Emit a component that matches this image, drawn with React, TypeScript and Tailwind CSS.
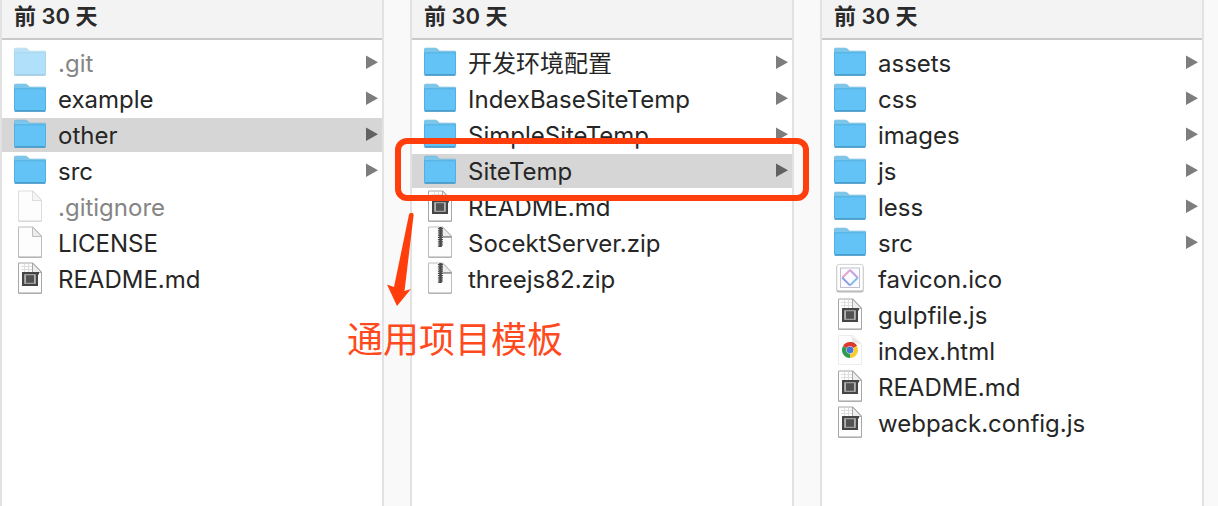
import { Fragment } from 'react';
import type { ReactNode } from 'react';

type Kind = 'folder' | 'blank' | 'code' | 'zip' | 'ico' | 'html';

interface Entry {
  name: string;
  kind: Kind;
  hidden?: boolean;
  selected?: boolean;
  note?: string;
}

const columns: { title: string; entries: Entry[] }[] = [
  {
    title: '前 30 天',
    entries: [
      { name: '.git', kind: 'folder', hidden: true },
      { name: 'example', kind: 'folder' },
      { name: 'other', kind: 'folder', selected: true },
      { name: 'src', kind: 'folder' },
      { name: '.gitignore', kind: 'blank', hidden: true },
      { name: 'LICENSE', kind: 'blank' },
      { name: 'README.md', kind: 'code' },
    ],
  },
  {
    title: '前 30 天',
    entries: [
      { name: '开发环境配置', kind: 'folder' },
      { name: 'IndexBaseSiteTemp', kind: 'folder' },
      { name: 'SimpleSiteTemp', kind: 'folder' },
      { name: 'SiteTemp', kind: 'folder', selected: true, note: '通用项目模板' },
      { name: 'README.md', kind: 'code' },
      { name: 'SocektServer.zip', kind: 'zip' },
      { name: 'threejs82.zip', kind: 'zip' },
    ],
  },
  {
    title: '前 30 天',
    entries: [
      { name: 'assets', kind: 'folder' },
      { name: 'css', kind: 'folder' },
      { name: 'images', kind: 'folder' },
      { name: 'js', kind: 'folder' },
      { name: 'less', kind: 'folder' },
      { name: 'src', kind: 'folder' },
      { name: 'favicon.ico', kind: 'ico' },
      { name: 'gulpfile.js', kind: 'code' },
      { name: 'index.html', kind: 'html' },
      { name: 'README.md', kind: 'code' },
      { name: 'webpack.config.js', kind: 'code' },
    ],
  },
];

function Sheet({ stroke = '#bdbdbd' }: { stroke?: string }) {
  return (
    <>
      <path d="M4.5 1H19l8.5 9v21.2h-23z" fill="#fdfdfd" stroke={stroke} />
      <path d="M18.5 1v9.5h9z" fill="#ededed" stroke={stroke} />
      <path d="M4.5 31.2h23" stroke="#a4a4a4" />
    </>
  );
}

const drawings: Record<Kind, ReactNode> = {
  folder: (
    <>
      <path d="M0.5 3.2q0-1 1-1h10q1 0 1.8 0.8l2.4 2.2H31q0.6 0 0.6 0.8v4H0.5z" fill="#7cc6ec" stroke="#69b6df" strokeWidth="0.8" />
      <path d="M0.5 6.6h31v21.6q0 1-1 1h-29q-1 0-1-1z" fill="#63c3f7" />
      <path d="M0.5 6.8h31" stroke="#55afdf" />
      <path d="M0.5 6.6v21.6M31.5 6.6v21.6" stroke="#53afe2" />
      <path d="M0.5 29h31" stroke="#4096c5" strokeWidth="1.6" />
    </>
  ),
  blank: <Sheet />,
  code: (
    <>
      <Sheet stroke="#a8a8a8" />
      <path d="M7 4.5h11M7 7.5h11M10.5 2v8M14.5 2v8" stroke="#dedede" />
      <path d="M8 10h17v2.500h-1V24H8z" fill="#454545" />
      <path d="M10.200 12.200h11.600v9.600H10.200z" fill="#b4b4b4" />
      <path d="M12 13.200h8v7.600h-8z" fill="#525252" />
    </>
  ),
  zip: (
    <>
      <Sheet />
      <path d="M19 11h8.500" stroke="#8a8a8a" strokeWidth="1.4" />
      <path d="M16.500 1v20" stroke="#4a4a4a" strokeWidth="2.600" />
      <path d="M14.8 2v19M18 2v18" stroke="#444" strokeWidth="1.800" strokeDasharray="1.2 1" />
    </>
  ),
  ico: (
    <>
      <rect x="2.4" y="3" width="27.2" height="27.4" rx="2.500" fill="#b8b8b8" />
      <rect x="2.8" y="2.4" width="26.4" height="26.4" rx="2" fill="#fff" stroke="#c6c6c6" strokeWidth="0.8" />
      <rect x="6.5" y="6" width="19" height="19.5" fill="#fbfbff" stroke="#bfc2cc" />
      <path d="M8.300 15.7L16 8" stroke="#e5a3c6" strokeWidth="2" />
      <path d="M16 8l7.700 7.7" stroke="#c0a2e0" strokeWidth="2" />
      <path d="M23.7 15.7L16 23.4" stroke="#82bce8" strokeWidth="2" />
      <path d="M16 23.4l-7.700-7.7" stroke="#8f9de2" strokeWidth="2" />
    </>
  ),
  html: (
    <>
      <path d="M4.5 1.5H19l8.5 8.5v20.5h-23z" fill="#fefefe" stroke="#ececec" />
      <path d="M17 1.5l2 7 8.5 1.5z" fill="#e6e6e6" />
      <path d="M16 16L9.07 12A8 8 0 0 1 22.93 12z" fill="#dc3a2c" />
      <path d="M16 16L22.93 12A8 8 0 0 1 16 24z" fill="#f7cc35" />
      <path d="M16 16L16 24A8 8 0 0 1 9.07 12z" fill="#2f9a4b" />
      <path d="M16 12h6.9q-2-4-6.9-4z" fill="#dc3a2c" />
      <circle cx="16" cy="16" r="3.8" fill="#dfe6ee" />
      <circle cx="16" cy="16" r="3.3" fill="#4476d8" />
    </>
  ),
};

function FileIcon({ kind, faded }: { kind: Kind; faded?: boolean }) {
  return (
    <svg
      viewBox="0 0 32 34"
      fill="none"
      aria-hidden="true"
      className={faded ? 'h-[34px] w-8 shrink-0 opacity-50' : 'h-[34px] w-8 shrink-0'}
    >
      {drawings[kind]}
    </svg>
  );
}

function Note({ text }: { text: string }) {
  return (
    <div className="pointer-events-none absolute -inset-x-[17px] -top-4 -bottom-[13px] z-10 rounded-xl border-6 border-[#ff3e0c]">
      <svg viewBox="0 0 28 96" aria-hidden="true" className="absolute top-[68px] -left-[15px] h-24 w-7">
        <path d="M23 2.5q1-2.500 3.500-1.500 1.500 0.800 1 3L18.500 79l6.500-2L11 94 1 72.500l7 2.500z" fill="#ff3e0c" />
      </svg>
      <p className="absolute top-[172px] -left-[54px] text-4xl leading-[48px] whitespace-nowrap text-[#ff4a20]">{text}</p>
    </div>
  );
}

function Row({ entry }: { entry: Entry }) {
  return (
    <li className="relative">
      <button
        type="button"
        className={`flex h-[34px] w-full items-center gap-3 pr-1 pl-3 text-left ${entry.selected ? 'bg-[#d6d6d6]' : ''}`}
      >
        <FileIcon kind={entry.kind} faded={entry.hidden} />
        <span className={`grow pt-0.5 whitespace-nowrap ${entry.hidden ? 'text-[#858585]' : 'text-[#262626]'}`}>{entry.name}</span>
        {entry.kind === 'folder' && (
          <svg
            viewBox="0 0 12 16"
            aria-hidden="true"
            className={`h-4 w-3 shrink-0 ${entry.selected ? 'text-[#626262]' : 'text-[#7d7d7d]'}`}
          >
            <path d="M0 0.500L12 7.200 0 14z" fill="currentColor" />
          </svg>
        )}
      </button>
      {entry.note && <Note text={entry.note} />}
    </li>
  );
}

export default function App() {
  return (
    <main className="flex min-h-screen overflow-hidden bg-[#f9f9f9] pr-[14px] font-['Inter','Noto_Sans_CJK_SC',sans-serif] text-2xl leading-8">
      {columns.map((column, index) => (
        <Fragment key={index}>
          {index > 0 && <div className="w-[26px] shrink-0" />}
          <section className="min-w-0 flex-1 border-x-2 border-[#e2e2e2] bg-white">
            <h2 className="h-10 border-b-2 border-[#c9c9c9] bg-[#f3f3f3] pl-3 text-[22px] leading-8 font-semibold text-[#2a2a2a]">
              {column.title}
            </h2>
            <ul className="flex flex-col gap-0.5 pt-1.5">
              {column.entries.map((entry) => (
                <Row key={entry.name} entry={entry} />
              ))}
            </ul>
          </section>
        </Fragment>
      ))}
    </main>
  );
}
